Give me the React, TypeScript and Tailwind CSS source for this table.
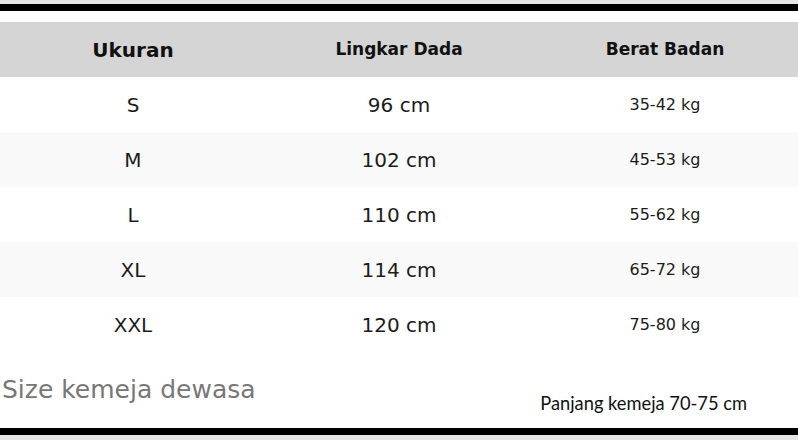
const ROWS = [
  { size: "S", dada: "96 cm", berat: "35-42 kg" },
  { size: "M", dada: "102 cm", berat: "45-53 kg" },
  { size: "L", dada: "110 cm", berat: "55-62 kg" },
  { size: "XL", dada: "114 cm", berat: "65-72 kg" },
  { size: "XXL", dada: "120 cm", berat: "75-80 kg" },
];

const dejavu = "font-['DejaVu_Sans',sans-serif]";

export default function App() {
  return (
    <div className={`w-[798px] h-[441px] overflow-hidden bg-white ${dejavu}`}>
      <div className="h-[4px] bg-[#e6e6e6]" />
      <div className="h-[7px] bg-black" />
      <div className="h-[11px] bg-white" />

      {/* Header */}
      <div className="grid grid-cols-3 h-[55px] bg-[#d5d5d5] text-[#111] font-bold items-center text-center">
        <div className="text-[20px]">Ukuran</div>
        <div className="text-[17px]">Lingkar Dada</div>
        <div className="text-[17px]">Berat Badan</div>
      </div>

      {/* Rows */}
      {ROWS.map((row, i) => (
        <div
          key={row.size}
          className={`grid grid-cols-3 h-[55px] items-center text-center text-[#1c1c1c] ${
            i % 2 === 1 ? "bg-[#f9f9f9]" : "bg-white"
          }`}
        >
          <div className="text-[20px]">{row.size}</div>
          <div className="text-[20px]">{row.dada}</div>
          <div className="text-[16px]">{row.berat}</div>
        </div>
      ))}

      {/* Footer notes */}
      <div className="h-[76px] flex">
        <div className="pl-[2px] pt-[23px] text-[25px] leading-[30px] text-[#777]">
          Size kemeja dewasa
        </div>
        <div className="ml-auto mr-[51px] pt-[40px] text-[18.3px] leading-[22px] text-[#111] font-['Lato',sans-serif]">
          Panjang kemeja 70-75 cm
        </div>
      </div>

      <div className="h-[7px] bg-black" />
      <div className="h-[5px] bg-[#e6e6e6]" />
    </div>
  );
}
